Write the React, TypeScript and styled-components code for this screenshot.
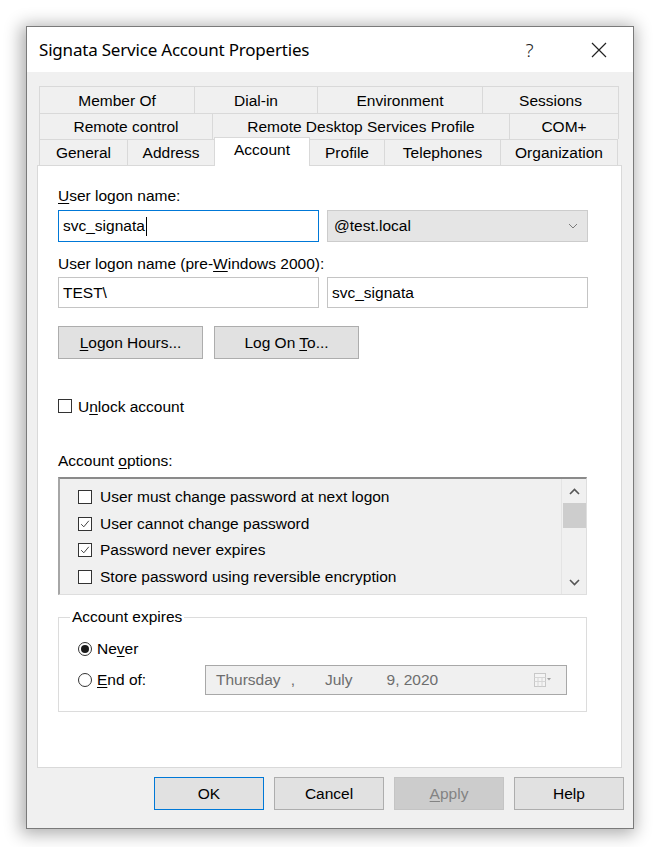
import React from 'react';
import styled, { createGlobalStyle } from 'styled-components';

const Global = createGlobalStyle`
  html, body { margin: 0; padding: 0; background: #ffffff; }
  body { font-family: "Liberation Sans", Arial, sans-serif; font-size: 15.5px; color: #000; }
  * { box-sizing: border-box; }
`;

const Page = styled.div`
  width: 659px;
  height: 847px;
  padding: 26px 0 0 26px;
`;

const Window = styled.div`
  width: 608px;
  height: 803px;
  border: 1px solid #7a7a7a;
  background: #f0f0f0;
  box-shadow: -2px 2px 16px 3px rgba(0, 0, 0, 0.32);
  display: flex;
  flex-direction: column;
`;

const TitleBar = styled.div`
  height: 45px;
  background: #ffffff;
  display: flex;
  align-items: center;
  padding-left: 12px;
`;

const Title = styled.div`
  flex: 1;
  font-family: "Noto Sans", "Open Sans", sans-serif;
  font-size: 17px;
  color: #000;
  letter-spacing: -0.2px;
`;

const CaptionButton = styled.div`
  width: 69px;
  height: 45px;
  display: flex;
  align-items: center;
  justify-content: center;
  font-family: "Noto Sans", sans-serif;
  font-size: 19px;
  font-weight: 300;
  color: #222;
`;

const Body = styled.div`
  flex: 1;
  display: flex;
  flex-direction: column;
  padding: 14px 10px 0 10px;
`;

const Tabs = styled.div`
  margin: 0 2px;
  display: flex;
  flex-direction: column;
`;

const TabRow = styled.div<{ $h: number }>`
  height: ${(p) => p.$h}px;
  display: flex;
  align-items: flex-start;
`;

const Tab = styled.div<{ $w: number; $h: number; $active?: boolean }>`
  width: ${(p) => p.$w}px;
  height: ${(p) => (p.$active ? p.$h + 3 : p.$h)}px;
  margin-top: ${(p) => (p.$active ? -2 : 0)}px;
  border-top: 1px solid #d9d9d9;
  border-left: 1px solid #d9d9d9;
  background: ${(p) => (p.$active ? '#ffffff' : '#f0f0f0')};
  display: flex;
  justify-content: center;
  align-items: ${(p) => (p.$active ? 'flex-start' : 'center')};
  padding-top: ${(p) => (p.$active ? 3 : 1)}px;
  color: #000;
  position: ${(p) => (p.$active ? 'relative' : 'static')};
  z-index: ${(p) => (p.$active ? 2 : 'auto')};
  ${(p) => (p.$active ? 'border-right: 1px solid #d9d9d9; margin-right: -1px;' : '')}
  &:last-child {
    border-right: 1px solid #d9d9d9;
  }
`;

const Panel = styled.div`
  width: 585px;
  height: 603px;
  border: 1px solid #d9d9d9;
  background: #ffffff;
  display: flex;
  flex-direction: column;
  padding: 0 0 0 20px;
`;

const Label = styled.div<{ $mt: number }>`
  margin-top: ${(p) => p.$mt}px;
  line-height: 20px;
  height: 18px;
`;

const Key = styled.span`
  text-decoration: underline;
  text-underline-offset: 2px;
  text-decoration-thickness: 1px;
`;

const FieldRow = styled.div<{ $mt: number; $h: number }>`
  margin-top: ${(p) => p.$mt}px;
  height: ${(p) => p.$h}px;
  display: flex;
  gap: 8px;
`;

const TextBox = styled.div<{ $focused?: boolean }>`
  width: 261px;
  height: 100%;
  border: 1px solid ${(p) => (p.$focused ? '#0078d7' : '#c4c4c4')};
  background: #fff;
  display: flex;
  align-items: center;
  padding-left: 4px;
`;

const Caret = styled.span`
  display: inline-block;
  width: 1px;
  height: 19px;
  background: #000;
  margin-left: 1px;
`;

const Combo = styled.div`
  width: 261px;
  height: 100%;
  border: 1px solid #cccccc;
  background: #e5e5e5;
  display: flex;
  align-items: center;
  justify-content: space-between;
  padding: 0 9px 0 6px;
`;

const ButtonRow = styled.div<{ $mt: number; $gap: number }>`
  margin-top: ${(p) => p.$mt}px;
  display: flex;
  gap: ${(p) => p.$gap}px;
`;

const Button = styled.div<{ $w: number; $h: number; $default?: boolean; $disabled?: boolean }>`
  width: ${(p) => p.$w}px;
  height: ${(p) => p.$h}px;
  border: 1px solid ${(p) => (p.$default ? '#0078d7' : p.$disabled ? '#c4c4c4' : '#adadad')};
  background: ${(p) => (p.$disabled ? '#cccccc' : '#e1e1e1')};
  color: ${(p) => (p.$disabled ? '#838383' : '#000')};
  display: flex;
  align-items: center;
  justify-content: center;
  padding-top: 1px;
  white-space: pre;
`;

const CheckRow = styled.div<{ $mt?: number; $h?: number }>`
  margin-top: ${(p) => p.$mt ?? 0}px;
  height: ${(p) => p.$h ?? 18}px;
  display: flex;
  align-items: center;
  gap: 6px;
`;

const CheckText = styled.span`
  padding-top: 2px;
`;

const Box = styled.div`
  width: 14px;
  height: 14px;
  border: 1px solid #333333;
  background: #fff;
  display: flex;
  align-items: center;
  justify-content: center;
`;

const ListBox = styled.div`
  margin-top: 8px;
  width: 529px;
  height: 118px;
  border-top: 2px solid #8a8a8a;
  border-left: 2px solid #a6a6a6;
  border-right: 1px solid #dedede;
  border-bottom: 1px solid #dedede;
  background: #f0f0f0;
  display: flex;
`;

const ListItems = styled.div`
  flex: 1;
  padding: 5px 0 0 18px;
  display: flex;
  flex-direction: column;
`;

const ListItem = styled.div`
  height: 26.5px;
  display: flex;
  align-items: center;
  gap: 8px;
`;

const ScrollBar = styled.div`
  width: 25px;
  border-left: 1px solid #e4e4e4;
  display: flex;
  flex-direction: column;
  align-items: center;
`;

const ScrollArrow = styled.div`
  height: 24px;
  width: 100%;
  display: flex;
  align-items: center;
  justify-content: center;
`;

const Thumb = styled.div`
  width: 23px;
  height: 25px;
  background: #cdcdcd;
`;

const ScrollTrack = styled.div`
  flex: 1;
`;

const Group = styled.fieldset`
  margin: 13px 0 0 0;
  width: 529px;
  min-width: 0;
  border: 1px solid #dcdcdc;
  padding: 0 0 16px 19px;
`;

const Legend = styled.legend`
  margin-left: -8px;
  padding: 0 2px;
  line-height: 18px;
`;

const RadioRow = styled.div<{ $mt: number }>`
  margin-top: ${(p) => p.$mt}px;
  display: flex;
  align-items: center;
  min-height: 22px;
`;

const RadioLabel = styled.div<{ $w?: number }>`
  display: flex;
  align-items: center;
  gap: 5px;
  width: ${(p) => (p.$w ? `${p.$w}px` : 'auto')};
`;

const Radio = styled.div<{ $on?: boolean }>`
  width: 14px;
  height: 14px;
  border-radius: 50%;
  border: 1px solid #333;
  background: #fff;
  display: flex;
  align-items: center;
  justify-content: center;
  &::after {
    content: '';
    display: ${(p) => (p.$on ? 'block' : 'none')};
    width: 8px;
    height: 8px;
    border-radius: 50%;
    background: #1a1a1a;
  }
`;

const DateBox = styled.div`
  width: 362px;
  height: 30px;
  border: 1px solid #a8a8a8;
  background: #f0f0f0;
  display: flex;
  align-items: center;
  padding: 0 14px 0 10px;
  color: #6d6d6d;
`;

const DatePart = styled.span<{ $ml: number }>`
  margin-left: ${(p) => p.$ml}px;
`;

const DateIcon = styled.div`
  margin-left: auto;
  display: flex;
  align-items: center;
`;

const BottomBar = styled.div`
  margin-top: 9px;
  display: flex;
  justify-content: flex-end;
  gap: 10px;
  margin-right: -1px;
`;

const Check = () => (
  <svg width="10" height="10" viewBox="0 0 10 10">
    <polyline points="1.2,5.2 3.8,7.8 8.8,1.8" fill="none" stroke="#444" strokeWidth="1" />
  </svg>
);

const Chevron = ({ up }: { up?: boolean }) => (
  <svg width="11" height="7" viewBox="0 0 11 7">
    <polyline
      points={up ? '1,6 5.5,1.5 10,6' : '1,1 5.5,5.5 10,1'}
      fill="none"
      stroke="#555"
      strokeWidth="1.6"
    />
  </svg>
);

const tabRows: { h: number; tabs: { t: string; w: number; active?: boolean }[] }[] = [
  {
    h: 27,
    tabs: [
      { t: 'Member Of', w: 155 },
      { t: 'Dial-in', w: 123 },
      { t: 'Environment', w: 165 },
      { t: 'Sessions', w: 137 },
    ],
  },
  {
    h: 26,
    tabs: [
      { t: 'Remote control', w: 173 },
      { t: 'Remote Desktop Services Profile', w: 297 },
      { t: 'COM+', w: 110 },
    ],
  },
  {
    h: 26,
    tabs: [
      { t: 'General', w: 88 },
      { t: 'Address', w: 87 },
      { t: 'Account', w: 96, active: true },
      { t: 'Profile', w: 75 },
      { t: 'Telephones', w: 116 },
      { t: 'Organization', w: 118 },
    ],
  },
];

const options = [
  { t: 'User must change password at next logon', c: false },
  { t: 'User cannot change password', c: true },
  { t: 'Password never expires', c: true },
  { t: 'Store password using reversible encryption', c: false },
];

export default function App() {
  return (
    <Page>
      <Global />
      <Window>
        <TitleBar>
          <Title>Signata Service Account Properties</Title>
          <CaptionButton>?</CaptionButton>
          <CaptionButton>
            <svg width="16" height="16" viewBox="0 0 16 16">
              <path d="M1 1 L15 15 M15 1 L1 15" stroke="#222" strokeWidth="1.2" fill="none" />
            </svg>
          </CaptionButton>
        </TitleBar>
        <Body>
          <Tabs>
            {tabRows.map((row, i) => (
              <TabRow key={i} $h={row.h}>
                {row.tabs.map((tab, j) => (
                  <Tab key={j} $w={tab.w} $h={row.h} $active={tab.active}>
                    {tab.t}
                  </Tab>
                ))}
              </TabRow>
            ))}
          </Tabs>
          <Panel>
            <Label $mt={20}>
              <Key>U</Key>ser logon name:
            </Label>
            <FieldRow $mt={6} $h={32}>
              <TextBox $focused>
                svc_signata
                <Caret />
              </TextBox>
              <Combo>
                <span>@test.local</span>
                <svg width="10" height="6" viewBox="0 0 10 6">
                  <polyline points="1,1 5,5 9,1" fill="none" stroke="#7a7a7a" strokeWidth="1" />
                </svg>
              </Combo>
            </FieldRow>
            <Label $mt={12}>
              User logon name (pre-<Key>W</Key>indows 2000):
            </Label>
            <FieldRow $mt={5} $h={31}>
              <TextBox>TEST\</TextBox>
              <TextBox>svc_signata</TextBox>
            </FieldRow>
            <ButtonRow $mt={18} $gap={11}>
              <Button $w={145} $h={33}>
                <span>
                  <Key>L</Key>ogon Hours...
                </span>
              </Button>
              <Button $w={145} $h={33}>
                <span>
                  {'Log On '}
                  <Key>T</Key>
                  {'o...'}
                </span>
              </Button>
            </ButtonRow>
            <CheckRow $mt={38}>
              <Box />
              <CheckText>
                U<Key>n</Key>lock account
              </CheckText>
            </CheckRow>
            <Label $mt={36}>
              Account <Key>o</Key>ptions:
            </Label>
            <ListBox>
              <ListItems>
                {options.map((o) => (
                  <ListItem key={o.t}>
                    <Box>{o.c && <Check />}</Box>
                    <span>{o.t}</span>
                  </ListItem>
                ))}
              </ListItems>
              <ScrollBar>
                <ScrollArrow>
                  <Chevron up />
                </ScrollArrow>
                <Thumb />
                <ScrollTrack />
                <ScrollArrow>
                  <Chevron />
                </ScrollArrow>
              </ScrollBar>
            </ListBox>
            <Group>
              <Legend>Account expires</Legend>
              <RadioRow $mt={12}>
                <RadioLabel>
                  <Radio $on />
                  <span>
                    Ne<Key>v</Key>er
                  </span>
                </RadioLabel>
              </RadioRow>
              <RadioRow $mt={5}>
                <RadioLabel $w={127}>
                  <Radio />
                  <span>
                    <Key>E</Key>nd of:
                  </span>
                </RadioLabel>
                <DateBox>
                  <DatePart $ml={0}>Thursday</DatePart>
                  <DatePart $ml={10}>,</DatePart>
                  <DatePart $ml={30}>July</DatePart>
                  <DatePart $ml={34}>9, 2020</DatePart>
                  <DateIcon>
                    <svg width="18" height="14" viewBox="0 0 18 14">
                      <rect x="0.5" y="0.5" width="11" height="13" fill="#f4f4f4" stroke="#c8c8c8" />
                      <path d="M0.5 4.5 H11.5 M0.5 8.5 H11.5 M4 4.5 V13.5 M8 4.5 V13.5" stroke="#d6d6d6" />
                      <polygon points="13,5 17,5 15,7.5" fill="#a0a0a0" />
                    </svg>
                  </DateIcon>
                </DateBox>
              </RadioRow>
            </Group>
          </Panel>
          <BottomBar>
            <Button $w={110} $h={33} $default>
              OK
            </Button>
            <Button $w={110} $h={33}>
              Cancel
            </Button>
            <Button $w={110} $h={33} $disabled>
              <span>
                <Key>A</Key>pply
              </span>
            </Button>
            <Button $w={110} $h={33}>
              Help
            </Button>
          </BottomBar>
        </Body>
      </Window>
    </Page>
  );
}
